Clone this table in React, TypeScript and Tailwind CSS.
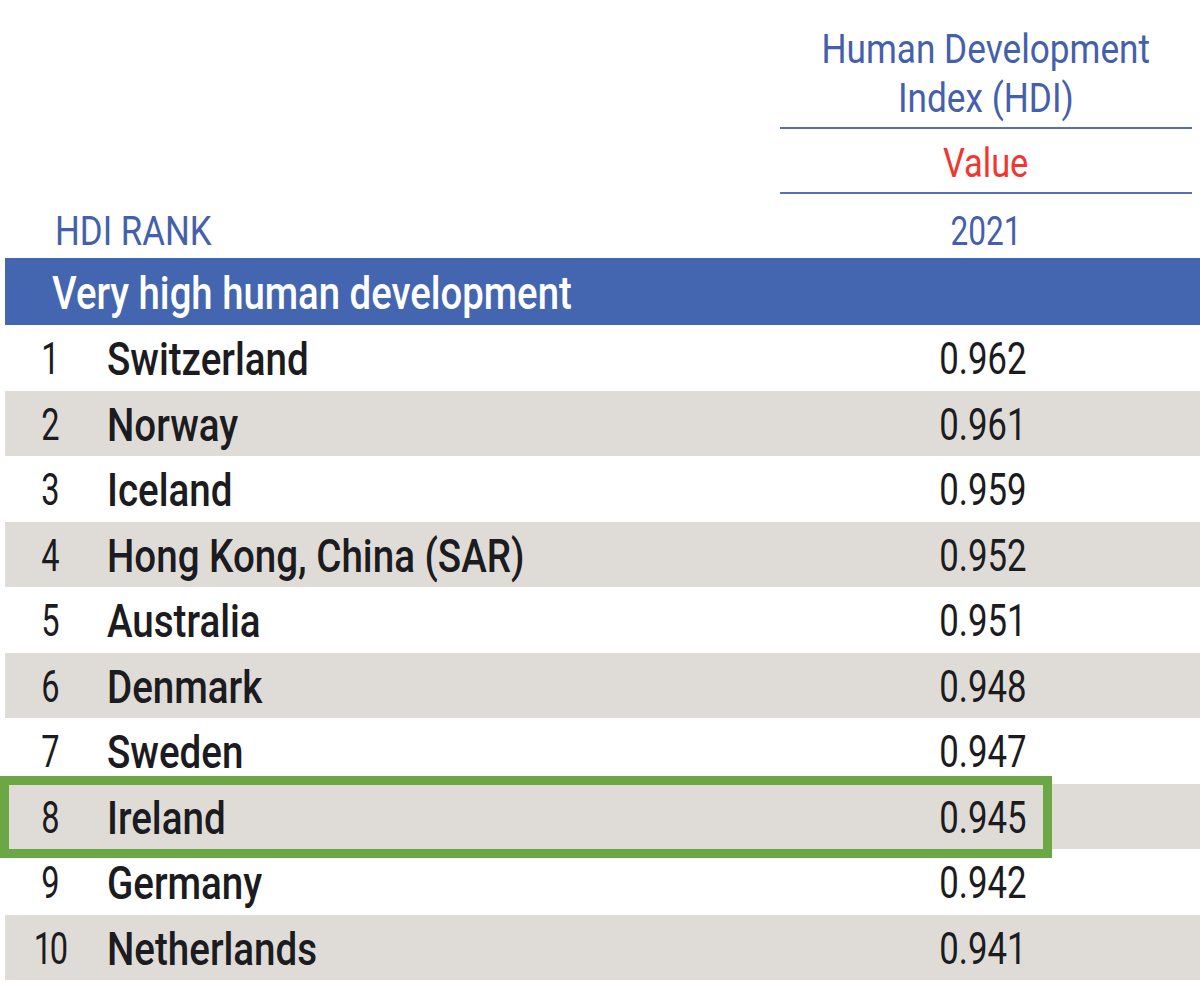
const rows: [number, string, string][] = [
  [1, 'Switzerland', '0.962'],
  [2, 'Norway', '0.961'],
  [3, 'Iceland', '0.959'],
  [4, 'Hong Kong, China (SAR)', '0.952'],
  [5, 'Australia', '0.951'],
  [6, 'Denmark', '0.948'],
  [7, 'Sweden', '0.947'],
  [8, 'Ireland', '0.945'],
  [9, 'Germany', '0.942'],
  [10, 'Netherlands', '0.941'],
]

// the print font is a condensed face; Roboto squeezed horizontally stands in for it
const font = "font-['Roboto',sans-serif]"

export default function App() {
  return (
    <div className={`w-[1200px] h-[985px] bg-white overflow-hidden ${font}`}>
      {/* column header */}
      <div className="h-[258px] flex flex-col">
        <div className="ml-[780px] w-[412px] pt-[25px] text-center text-[40px] leading-[49px]">
          <div className="text-[#4560ab]">
            <span className="inline-block origin-center scale-x-[0.88]">Human Development</span>
            <br />
            <span className="inline-block origin-center scale-x-[0.88]">Index (HDI)</span>
          </div>
          <div className="mt-[4px] border-t-2 border-[#5570b4]" />
          <div className="mt-[10px] text-[#f2362f]">
            <span className="inline-block origin-center scale-x-[0.86]">Value</span>
          </div>
          <div className="mt-[4px] border-t-2 border-[#5570b4]" />
        </div>
        <div className="mt-[13px] flex text-[40px] leading-[49px] text-[#4560ab]">
          <div className="pl-[55px] w-[780px]">
            <span className="inline-block origin-left scale-x-[0.87]">HDI RANK</span>
          </div>
          <div className="w-[412px] text-center">
            <span className="inline-block origin-center scale-x-[0.79]">2021</span>
          </div>
        </div>
      </div>

      {/* group band */}
      <div className="ml-[5px] h-[67px] bg-[#4466b0] flex items-center pl-[47px] pt-[2px] text-white text-[47px] font-medium leading-none">
        <span className="inline-block origin-left scale-x-[0.815]">Very high human development</span>
      </div>

      {/* rows */}
      <div className="ml-[5px]">
        {rows.map(([rank, name, value]) => (
          <div
            key={rank}
            className={`relative h-[65.5px] flex items-center pt-[3px] text-[#1b1b20] ${rank % 2 === 0 ? 'bg-[#dfdcd8]' : 'bg-white'}`}
          >
            <div className="w-[90px] text-center text-[44px]">
              <span className={`inline-block origin-center scale-x-[0.74] ${rank === 10 ? 'tracking-[-3px]' : ''}`}>{rank}</span>
            </div>
            <div className="ml-[12px] flex-1 text-[47px] font-medium">
              <span className="inline-block origin-left scale-x-[0.82]">{name}</span>
            </div>
            <div className="pr-[173px] text-[44px] tabular-nums">
              <span className="inline-block origin-right scale-x-[0.79]">{value}</span>
            </div>
            {rank === 8 && (
              <div className="absolute z-10 left-[-5px] top-[-8px] bottom-[-9px] w-[1052px] border-[9px] border-[#6ca745]" />
            )}
          </div>
        ))}
      </div>
    </div>
  )
}
